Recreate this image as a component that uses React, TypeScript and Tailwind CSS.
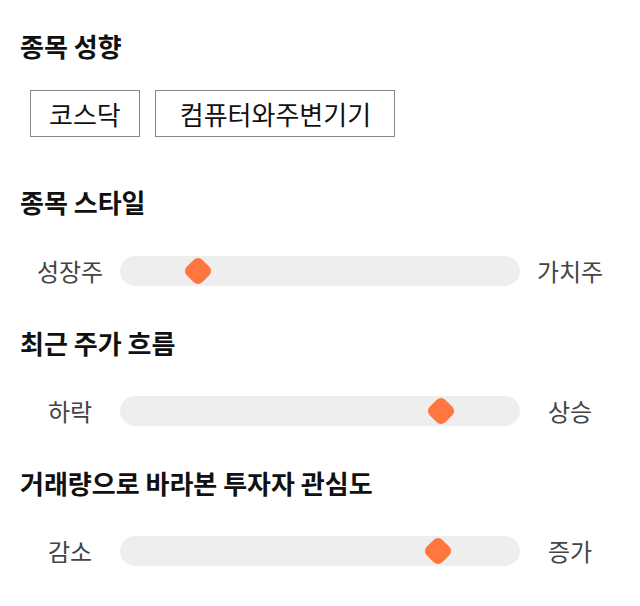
import React from "react";

const font = { fontFamily: '"Noto Sans CJK KR", "Noto Sans", sans-serif' };

function Title({ children, className = "" }: { children: React.ReactNode; className?: string }) {
  return <h2 className={`text-[26px] leading-[32px] font-bold text-[#111] ${className}`}>{children}</h2>;
}

function SliderRow({ left, right, pos, className = "" }: { left: string; right: string; pos: number; className?: string }) {
  return (
    <div className={`flex items-center h-[30px] ${className}`}>
      <div className="w-[100px] text-center text-[24px] leading-[30px] text-[#444]">{left}</div>
      <div className="relative flex-1 h-[30px] rounded-full bg-[#eeeeee]">
        <div
          className="absolute top-1/2 w-[22px] h-[22px] -translate-x-1/2 -translate-y-1/2 rotate-45 rounded-[6px] bg-[#ff763f]"
          style={{ left: `${pos}px` }}
        />
      </div>
      <div className="w-[100px] text-center text-[24px] leading-[30px] text-[#444]">{right}</div>
    </div>
  );
}

export default function App() {
  return (
    <div className="w-[640px] h-[606px] bg-white px-5 pt-[30px]" style={font}>
      <Title>종목 성향</Title>
      <div className="flex gap-[15px] ml-[10px] mt-[28px]">
        <div className="h-[47px] px-[18px] flex items-center border border-[#888] text-[26px] text-[#111]">코스닥</div>
        <div className="h-[47px] pl-[24px] pr-[23px] flex items-center border border-[#888] text-[26px] text-[#111]">컴퓨터와주변기기</div>
      </div>
      <Title className="mt-[49px]">종목 스타일</Title>
      <SliderRow className="mt-[38px]" left="성장주" right="가치주" pos={78} />
      <Title className="mt-[41px]">최근 주가 흐름</Title>
      <SliderRow className="mt-[37px]" left="하락" right="상승" pos={321} />
      <Title className="mt-[41px]">거래량으로 바라본 투자자 관심도</Title>
      <SliderRow className="mt-[37px]" left="감소" right="증가" pos={318} />
    </div>
  );
}
